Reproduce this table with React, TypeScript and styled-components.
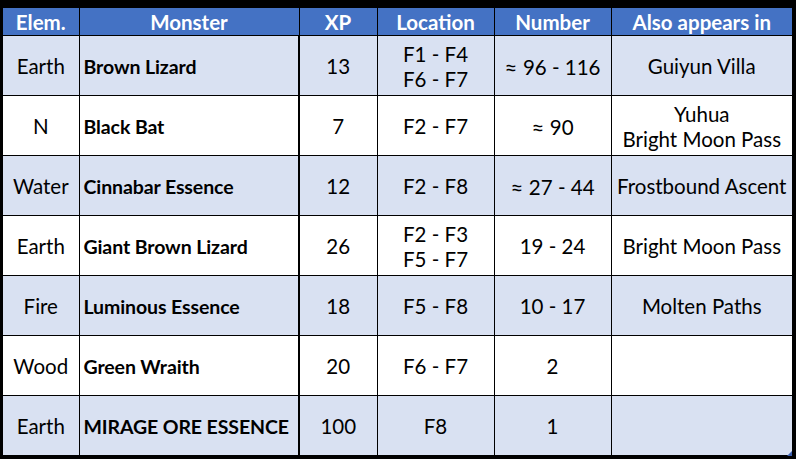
import React from 'react';
import styled, { createGlobalStyle } from 'styled-components';

const GlobalStyle = createGlobalStyle`
  html, body {
    margin: 0;
    padding: 0;
    background: #000;
  }
  body {
    font-family: Lato, "Open Sans", sans-serif;
  }
`;

const Frame = styled.div`
  width: 796px;
  height: 459px;
  box-sizing: border-box;
  padding: 8px 4px 4px 3px;
  background: #000;
  overflow: hidden;
`;

const TableWrap = styled.div`
  position: relative;
  width: 789px;
`;

const Table = styled.table`
  width: 789px;
  border-collapse: collapse;
  table-layout: fixed;
  font-size: 20.5px;
  color: #000;
`;

const HeadCell = styled.th`
  background: #4472c4;
  color: #fff;
  font-weight: 700;
  height: 26px;
  padding: 1px 0 0;
  text-align: center;
  border-left: 1px solid #000;
  border-bottom: 1px solid #000;
  line-height: 26px;
  white-space: nowrap;
  &:first-child {
    border-left: none;
  }
`;

const Row = styled.tr<{ $shaded: boolean }>`
  background: ${({ $shaded }) => ($shaded ? '#d9e1f2' : '#ffffff')};
`;

const Cell = styled.td<{ $bold?: boolean; $left?: boolean }>`
  height: 57px;
  padding: ${({ $left }) => ($left ? '2px 0 0 4px' : '2px 0 0')};
  text-align: ${({ $left }) => ($left ? 'left' : 'center')};
  font-weight: ${({ $bold }) => ($bold ? 700 : 400)};
  font-size: ${({ $bold }) => ($bold ? '19.5px' : 'inherit')};
  letter-spacing: ${({ $bold }) => ($bold ? '-0.1px' : 'normal')};
  border-left: 1px solid #000;
  border-bottom: 1px solid #000;
  line-height: 25px;
  vertical-align: middle;
  white-space: nowrap;
  &:first-child {
    border-left: none;
  }
`;

const ThickCell = styled(Cell)`
  border-left: 2px solid #000;
`;

const Approx = styled.span`
  font-size: 22px;
`;

const Corner = styled.div`
  position: absolute;
  right: 0;
  bottom: 0;
  width: 5px;
  height: 5px;
  background: #3d5fae;
  clip-path: polygon(100% 0, 100% 100%, 0 100%);
`;

type Monster = {
  elem: string;
  name: string;
  xp: string;
  location: string[];
  number: string;
  approx?: boolean;
  also: string[];
};

const monsters: Monster[] = [
  { elem: 'Earth', name: 'Brown Lizard', xp: '13', location: ['F1 - F4', 'F6 - F7'], number: '96 - 116', approx: true, also: ['Guiyun Villa'] },
  { elem: 'N', name: 'Black Bat', xp: '7', location: ['F2 - F7'], number: '90', approx: true, also: ['Yuhua', 'Bright Moon Pass'] },
  { elem: 'Water', name: 'Cinnabar Essence', xp: '12', location: ['F2 - F8'], number: '27 - 44', approx: true, also: ['Frostbound Ascent'] },
  { elem: 'Earth', name: 'Giant Brown Lizard', xp: '26', location: ['F2 - F3', 'F5 - F7'], number: '19 - 24', also: ['Bright Moon Pass'] },
  { elem: 'Fire', name: 'Luminous Essence', xp: '18', location: ['F5 - F8'], number: '10 - 17', also: ['Molten Paths'] },
  { elem: 'Wood', name: 'Green Wraith', xp: '20', location: ['F6 - F7'], number: '2', also: [] },
  { elem: 'Earth', name: 'MIRAGE ORE ESSENCE', xp: '100', location: ['F8'], number: '1', also: [] },
];

const lines = (items: string[]) =>
  items.map((t, i) => (
    <React.Fragment key={i}>
      {i > 0 && <br />}
      {t}
    </React.Fragment>
  ));

export default function App() {
  return (
    <>
      <GlobalStyle />
      <Frame>
        <TableWrap>
          <Table>
            <colgroup>
              <col style={{ width: 76 }} />
              <col style={{ width: 220 }} />
              <col style={{ width: 78 }} />
              <col style={{ width: 117 }} />
              <col style={{ width: 117 }} />
              <col style={{ width: 181 }} />
            </colgroup>
            <thead>
              <tr>
                <HeadCell>Elem.</HeadCell>
                <HeadCell>Monster</HeadCell>
                <HeadCell>XP</HeadCell>
                <HeadCell>Location</HeadCell>
                <HeadCell>Number</HeadCell>
                <HeadCell>Also appears in</HeadCell>
              </tr>
            </thead>
            <tbody>
              {monsters.map((m, i) => (
                <Row key={m.name} $shaded={i % 2 === 0}>
                  <Cell>{m.elem}</Cell>
                  <Cell $bold $left>{m.name}</Cell>
                  <ThickCell>{m.xp}</ThickCell>
                  <Cell>{lines(m.location)}</Cell>
                  <Cell>
                    {m.approx && <Approx>≈ </Approx>}
                    {m.number}
                  </Cell>
                  <Cell>{lines(m.also)}</Cell>
                </Row>
              ))}
            </tbody>
          </Table>
          <Corner />
        </TableWrap>
      </Frame>
    </>
  );
}
